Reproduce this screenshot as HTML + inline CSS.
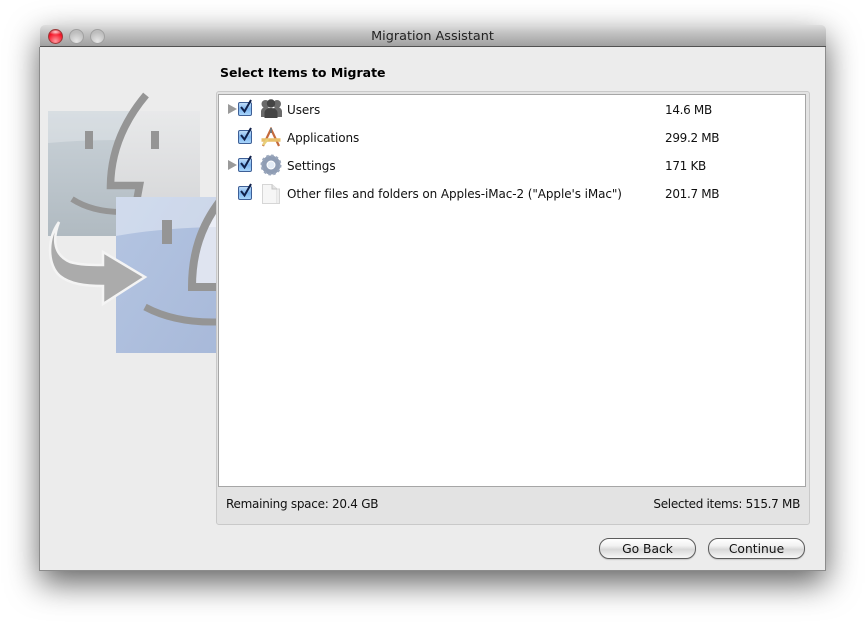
<!DOCTYPE html>
<html><head><meta charset="utf-8">
<style>
html,body{margin:0;padding:0;background:#fff}
#r{position:relative;width:865px;height:626px;overflow:hidden;background:#fff;font-family:"DejaVu Sans","Liberation Sans",sans-serif;font-size:12px;color:#111}
#win{position:absolute;left:39.5px;top:25px;width:786px;height:546px;background:#ececec;border-radius:5px 5px 0 0;box-shadow:0 12px 32px rgba(0,0,0,.62)}
#edge{position:absolute;left:39px;top:47px;width:785px;height:523px;border:1px solid #8c8c8c;border-top:0}
#tb{position:absolute;left:39.5px;top:25px;width:786px;height:21px;border-radius:5px 5px 0 0;background:linear-gradient(#dedede,#c4c4c4 35%,#a0a0a0);border-bottom:1px solid #515151}
.t{position:absolute;white-space:nowrap;line-height:14px;letter-spacing:-.09px}
.n{letter-spacing:-.32px}
.dot{position:absolute;top:29px;width:13px;height:13px;border-radius:50%;border:1px solid #a0a0a0;background:radial-gradient(circle at 50% 85%,#e6e6e6,#bdbdbd 70%)}
#red{border-color:#9a3a3a;background:radial-gradient(ellipse 7px 3px at 50% 15%,#ffd6d6,transparent),radial-gradient(circle at 50% 85%,#ff9aa0,#f5182a 60%,#b80414)}
#panel{position:absolute;left:216px;top:91px;width:592px;height:432px;background:#e3e3e3;border:1px solid #c9c9c9;border-radius:3px}
#list{position:absolute;left:218px;top:94px;width:586px;height:391px;background:#fff;border:1px solid #a6a6a6}
.btn{position:absolute;top:538px;height:19px;border:1px solid #5c5c5c;border-radius:10px;background:linear-gradient(#fff,#f2f2f2 35%,#d8d8d8 55%,#f4f4f4 95%);text-align:center;line-height:20px;color:#111;box-shadow:0 1px 1px rgba(0,0,0,.15);font-size:12.3px}
.cb{position:absolute;left:238px;width:12px;height:12px;border:1px solid #3e5f96;border-radius:2px;background:linear-gradient(#bfdcf8,#7fb6f0 50%,#a8d4fb)}
.tri{position:absolute;left:228px;width:0;height:0;border-left:9px solid #9a9a9a;border-top:5px solid transparent;border-bottom:5px solid transparent}
svg{position:absolute}
</style></head><body>
<div id="r">
<div id="win"></div>
<div id="edge"></div>
<div id="tb"></div>
<div class="dot" id="red" style="left:48px"></div>
<div class="dot" style="left:69px"></div>
<div class="dot" style="left:90px"></div>
<div class="t" style="left:0;width:865px;text-align:center;top:30px;font-size:12.8px;color:#222;letter-spacing:0">Migration Assistant</div>

<svg style="left:0;top:0" width="217" height="365" viewBox="0 0 217 365">
<defs>
<linearGradient id="b1" x1="0" y1="0" x2="0" y2="1"><stop offset="0" stop-color="#cbd3d9"/><stop offset="1" stop-color="#b0bac1"/></linearGradient>
<linearGradient id="b2" x1="0" y1="0" x2="0" y2="1"><stop offset="0" stop-color="#e8e9ea"/><stop offset="1" stop-color="#d2d3d5"/></linearGradient>
<linearGradient id="f1" x1="0" y1="0" x2="1" y2="1"><stop offset="0" stop-color="#b4c5e2"/><stop offset="1" stop-color="#a8b9d9"/></linearGradient>
</defs>
<rect x="48" y="111" width="152" height="125" fill="url(#b1)"/>
<path d="M133 111H200V236H120L137 197L139 185H111C112 160 120 135 133 111Z" fill="url(#b2)"/>
<path d="M48 111H133Q124 126 118 140Q80 140 48 143Z" fill="#fff" opacity=".25"/>
<rect x="85" y="131" width="8" height="18" fill="#959595"/>
<rect x="151" y="131" width="8" height="18" fill="#959595"/>
<path d="M146 95C125 120 111 150 110.500 185.500H139.500L137 199" fill="none" stroke="#959595" stroke-width="7.500"/>
<path d="M72 199Q92 212 122 212" fill="none" stroke="#959595" stroke-width="6"/>
<rect x="116" y="197" width="101" height="156" fill="url(#f1)"/>
<path d="M192 287C192 255 200 225 222 198V287Z" fill="#dfe4f0"/>
<path d="M116 197H217V227Q160 228 116 236Z" fill="#fff" opacity=".38"/>
<rect x="162" y="220" width="10" height="24" fill="#959595"/>
<path d="M224 196C200 225 192 255 192 287H217" fill="none" stroke="#959595" stroke-width="8"/>
<path d="M145 307Q175 323 217 322" fill="none" stroke="#959595" stroke-width="7"/>
<path d="M59 222C52 240 54 255 70 262C80 265 92 265 103 265V252L145 277L103 304V286C85 286 70 284 60 276C48 266 46 240 59 222Z" fill="#ababab" stroke="#f4f4f4" stroke-width="2.500"/>
</svg>

<div class="t" style="left:220px;top:66px;font-weight:bold;font-size:12.5px;color:#000;letter-spacing:0">Select Items to Migrate</div>
<div id="panel"></div>
<div id="list"></div>

<div class="tri" style="top:104px"></div>
<div class="cb" style="top:102px"></div>
<svg style="left:238px;top:99px" width="16" height="16"><path d="M3 8L6.500 12.500L13 1" fill="none" stroke="#10204a" stroke-width="2"/></svg>
<svg style="left:260px;top:98px" width="22" height="20"><circle cx="5.500" cy="6" r="4" fill="#6a6a6a"/><circle cx="17" cy="6" r="4" fill="#6a6a6a"/><path d="M1 19V13Q2 9 6 9Q10 9 11 13V19ZM12 19V13Q13 9 17 9Q21 9 22 13V19Z" fill="#6a6a6a"/><circle cx="11" cy="5.500" r="4.200" fill="#444"/><path d="M4.500 20V14Q6 10 11 10Q16 10 17.500 14V20Z" fill="#444"/></svg>
<div class="t" style="left:287px;top:103px">Users</div>
<div class="t n" style="left:665px;top:103px">14.6 MB</div>

<div class="cb" style="top:130px"></div>
<svg style="left:238px;top:127px" width="16" height="16"><path d="M3 8L6.500 12.500L13 1" fill="none" stroke="#10204a" stroke-width="2"/></svg>
<svg style="left:260px;top:127px" width="22" height="20"><path d="M3 19L11 2L19 19" fill="none" stroke="#c46a3c" stroke-width="2.200"/><path d="M1.500 13H20.500" stroke="#e8bf6a" stroke-width="3.500"/><path d="M11 1L11 6" stroke="#777" stroke-width="2"/><path d="M3 18L8 12" stroke="#e8d07a" stroke-width="2.500"/></svg>
<div class="t" style="left:287px;top:131px">Applications</div>
<div class="t n" style="left:665px;top:131px">299.2 MB</div>

<div class="tri" style="top:160px"></div>
<div class="cb" style="top:158px"></div>
<svg style="left:238px;top:155px" width="16" height="16"><path d="M3 8L6.500 12.500L13 1" fill="none" stroke="#10204a" stroke-width="2"/></svg>
<svg style="left:260px;top:154px" width="22" height="22"><circle cx="11" cy="11" r="7" fill="none" stroke="#8f9db4" stroke-width="5"/><circle cx="11" cy="11" r="9.400" fill="none" stroke="#9aa7bc" stroke-width="2.200" stroke-dasharray="2.600 2.300"/><circle cx="11" cy="11" r="3.500" fill="#e4ecf6"/></svg>
<div class="t" style="left:287px;top:159px">Settings</div>
<div class="t n" style="left:665px;top:159px">171 KB</div>

<div class="cb" style="top:186px"></div>
<svg style="left:238px;top:183px" width="16" height="16"><path d="M3 8L6.500 12.500L13 1" fill="none" stroke="#10204a" stroke-width="2"/></svg>
<svg style="left:260px;top:183px" width="22" height="22"><path d="M5 3H13V20H5Z" fill="#ededed" stroke="#dcdcdc"/><path d="M2.500 1.500H12L17 6V20.500H2.500Z" fill="#f6f6f6" stroke="#d6d6d6"/><path d="M12 1.500V6H17" fill="#e4e4e4" stroke="#c4c4c4"/><path d="M17 6H19.500V20.500H17" fill="#eee" stroke="#d6d6d6"/></svg>
<div class="t" style="left:287px;top:187px">Other files and folders on Apples-iMac-2 ("Apple's iMac")</div>
<div class="t n" style="left:665px;top:187px">201.7 MB</div>

<div class="t" style="left:226px;top:497px;letter-spacing:-.27px">Remaining space: 20.4 GB</div>
<div class="t" style="right:65px;top:497px;letter-spacing:-.3px">Selected items: 515.7 MB</div>

<div class="btn" style="left:599px;width:95px">Go Back</div>
<div class="btn" style="left:708px;width:95px">Continue</div>
</div>
</body></html>
